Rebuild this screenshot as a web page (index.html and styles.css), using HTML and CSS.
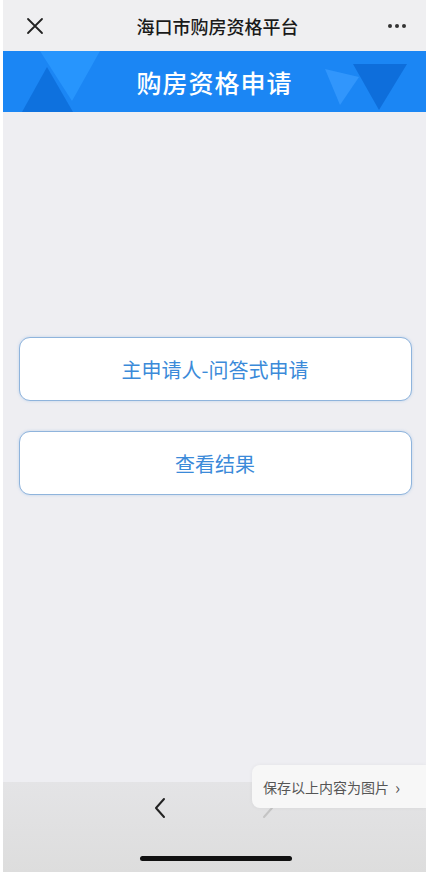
FILE: index.html
```html
<!DOCTYPE html>
<html lang="zh">
<head>
<meta charset="utf-8">
<link rel="stylesheet" href="styles.css">
</head>
<body>
<div class="screen">
  <div class="navbar">
    <svg class="close" width="20" height="20" viewBox="0 0 20 20"><path d="M3 3L17 17M17 3L3 17" stroke="#222" stroke-width="1.8" fill="none" stroke-linecap="round"/></svg>
    <div class="navtitle">海口市购房资格平台</div>
    <div class="dots"><span></span><span></span><span></span></div>
  </div>
  <div class="banner">
    <svg class="deco" width="423" height="61" viewBox="0 0 423 61">
      <polygon points="37,0 97,0 69,50" fill="#2a98ff" opacity="0.8"/>
      <polygon points="44,16 19,61 70,61" fill="#0d6fdb" opacity="0.9"/>
      <polygon points="322,18 356,26 337,54" fill="#3a9cff" opacity="0.7"/>
      <polygon points="350,13 404,13 376,59" fill="#0c6ad6" opacity="0.85"/>
    </svg>
    <div class="banner-title">购房资格申请</div>
  </div>
  <main class="content">
    <button class="action first">主申请人-问答式申请</button>
    <button class="action">查看结果</button>
  </main>
  <div class="toolbar">
    <svg class="back" width="14" height="22" viewBox="0 0 14 22"><path d="M11 2L3 11L11 20" stroke="#222" stroke-width="2" fill="none" stroke-linecap="round" stroke-linejoin="round"/></svg>
    <svg class="fwd" width="14" height="22" viewBox="0 0 14 22"><path d="M3 2L11 11L3 20" stroke="#c4c4c4" stroke-width="2" fill="none" stroke-linecap="round" stroke-linejoin="round"/></svg>
    <div class="homebar"></div>
    <div class="popup">保存以上内容为图片 <span class="chev">›</span></div>
  </div>
</div>
</body>
</html>
```
FILE: styles.css
```css
html, body {
  margin: 0;
  padding: 0;
  background: #ffffff;
}
body {
  font-family: "Noto Sans CJK SC", "Noto Sans", sans-serif;
}
.screen {
  width: 423px;
  height: 872px;
  margin-left: 3px;
  display: flex;
  flex-direction: column;
  background: #eeeef2;
  overflow: hidden;
  position: relative;
}
.navbar {
  height: 51px;
  flex: none;
  background: #efeff1;
  display: flex;
  align-items: center;
  justify-content: space-between;
  padding: 0 20px 0 22px;
  box-sizing: border-box;
}
.close { display: block; }
.navtitle {
  font-size: 18px;
  color: #1a1a1a;
  font-weight: 500;
  margin-left: 2px;
}
.dots {
  display: flex;
  gap: 3px;
}
.dots span {
  width: 4px;
  height: 4px;
  border-radius: 50%;
  background: #333;
}
.banner {
  height: 61px;
  flex: none;
  background: #1b86f4;
  display: flex;
  align-items: center;
  justify-content: center;
  position: relative;
}
.deco {
  position: absolute;
  left: 0;
  top: 0;
}
.banner-title {
  position: relative;
  color: #ffffff;
  font-size: 25px;
  font-weight: 500;
  letter-spacing: 1px;
}
.content {
  flex: 1;
  display: flex;
  flex-direction: column;
  align-items: center;
  padding-top: 225px;
  gap: 30px;
  background: #eeeef2;
}
.action {
  width: 393px;
  height: 64px;
  background: #ffffff;
  border: 1.5px solid #8fb4dc;
  border-radius: 11px;
  color: #3b8ad9;
  font-family: "Noto Sans CJK SC", sans-serif;
  font-size: 20px;
  box-shadow: 0 0 3px rgba(120,170,230,0.4);
  margin-left: 1px;
}
.toolbar {
  height: 90px;
  flex: none;
  background: linear-gradient(#e4e4e6, #dddddd);
  position: relative;
  display: flex;
  justify-content: center;
}
.back {
  position: absolute;
  left: 150px;
  top: 15px;
}
.fwd {
  position: absolute;
  left: 258px;
  top: 15px;
}
.homebar {
  position: absolute;
  left: 137px;
  top: 74px;
  width: 152px;
  height: 5px;
  border-radius: 3px;
  background: #111;
}
.popup {
  position: absolute;
  left: 249px;
  top: -17px;
  width: 174px;
  height: 43px;
  background: #f7f7f7;
  border-radius: 8px 0 0 8px;
  font-size: 14px;
  color: #555;
  display: flex;
  align-items: center;
  padding-left: 11px;
  box-sizing: border-box;
  box-shadow: 0 0 4px rgba(0,0,0,0.05);
}
.chev {
  margin-left: 6px;
  font-size: 17px;
  color: #555;
}
```
